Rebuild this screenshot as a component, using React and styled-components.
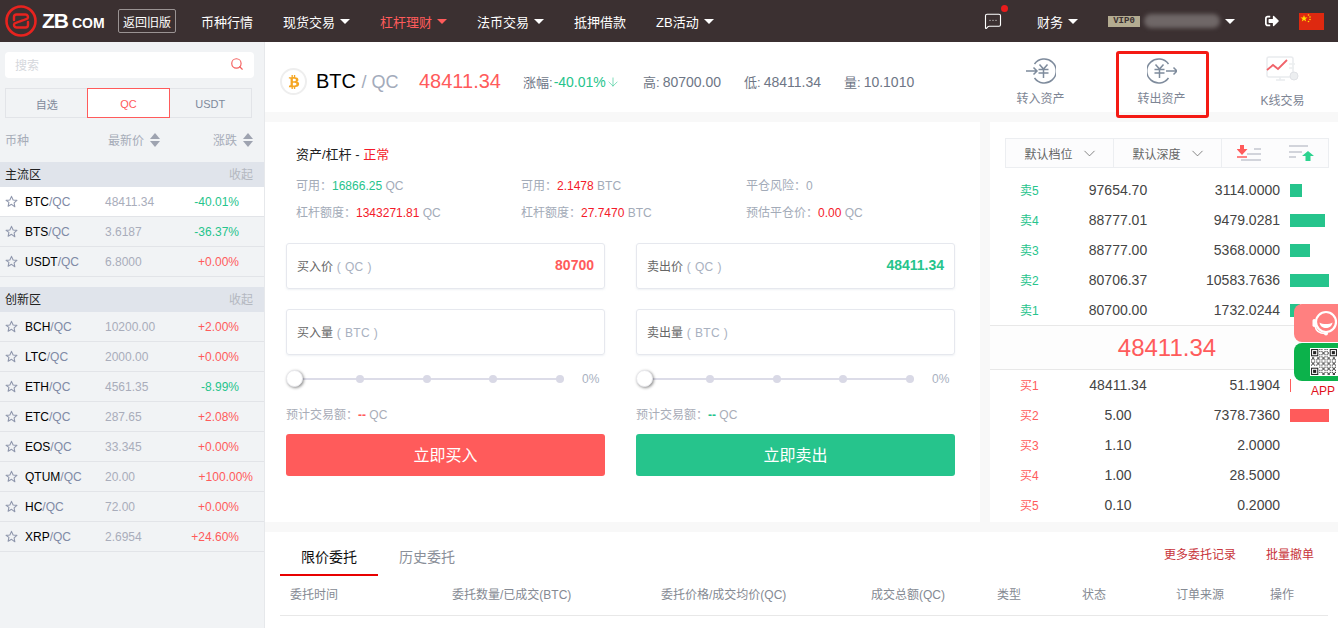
import React from 'react';
import styled, { createGlobalStyle } from 'styled-components';
import { Search, ChevronDown, MessageSquareMore, ArrowDown } from 'lucide-react';
import { FaBtc, FaSignOutAlt } from 'react-icons/fa';

const GREEN = '#26c48c';
const RED = '#ff5b5b';

const Global = createGlobalStyle`
  html, body { margin: 0; padding: 0; height: 628px; overflow: hidden; background: #f8f8f8; }
  body { font-family: "Liberation Sans", "Noto Sans CJK SC", sans-serif; font-size: 12px; color: #333; }
  * { box-sizing: border-box; }
`;

const Page = styled.div`
  position: relative;
  width: 1338px;
  height: 628px;
  overflow: hidden;
`;

/* ---------- top bar ---------- */
const Header = styled.header`
  height: 42px;
  background: #3b3031;
  display: flex;
  align-items: center;
  padding-left: 5px;
  color: #fff;
`;
const Logo = styled.div`
  display: flex;
  align-items: center;
  width: 113px;
`;
const LogoZb = styled.span`
  margin-left: 5px;
  font-size: 21px;
  font-weight: 700;
  letter-spacing: -1px;
  width: 30px;
`;
const LogoCom = styled.span`
  font-size: 14px;
  font-weight: 700;
  padding-top: 3px;
`;
const OldVersion = styled.a`
  border: 1px solid #9a9393;
  border-radius: 2px;
  height: 24px;
  width: 58px;
  font-size: 12px;
  display: flex;
  align-items: center;
  justify-content: center;
`;
const Nav = styled.nav`
  display: flex;
  align-items: center;
  gap: 30px;
  margin-left: 25px;
  flex: 1;
`;
const NavItem = styled.a`
  display: flex;
  align-items: center;
  font-size: 13px;
  margin-left: ${p => p.$ml || 0}px;
  color: ${p => (p.$active ? '#ff5b5b' : '#fff')};
`;
const Caret = styled.i`
  display: inline-block;
  margin-left: 5px;
  border-left: 5px solid transparent;
  border-right: 5px solid transparent;
  border-top: 5px solid currentColor;
`;
const HeaderRight = styled.div`
  display: flex;
  align-items: center;
  padding-right: 14px;
`;
const Msg = styled.div`
  position: relative;
  display: flex;
  width: 18px;
  margin-right: 35px;
`;
const MsgDot = styled.i`
  position: absolute;
  top: -7px;
  right: -6px;
  width: 7px;
  height: 7px;
  border-radius: 50%;
  background: #e91c1c;
`;
const VipBadge = styled.span`
  margin-left: 30px;
  width: 32px;
  height: 11px;
  background: #b4ac91;
  color: #3b3031;
  font-family: "Liberation Mono", monospace;
  font-size: 9px;
  font-weight: 700;
  line-height: 11px;
  text-align: center;
`;
const BlurName = styled.span`
  width: 76px;
  height: 14px;
  margin-left: 4px;
  border-radius: 7px;
  background: #6f6767;
  filter: blur(2px);
`;
const Flag = styled.svg`
  width: 25px;
  height: 17px;
  margin-left: 20px;
`;

/* ---------- layout ---------- */
const Body = styled.div`
  display: flex;
  height: 586px;
`;
const Side = styled.aside`
  width: 265px;
  flex: none;
  background: #f1f3f5;
  border-right: 1px solid #e6e8eb;
  padding-top: 10px;
`;
const Main = styled.main`
  flex: 1;
  display: flex;
  flex-direction: column;
  gap: 10px;
`;

/* ---------- sidebar ---------- */
const SearchBox = styled.div`
  margin: 0 10px 0 5px;
  height: 26px;
  background: #fff;
  border-radius: 4px;
  display: flex;
  align-items: center;
  justify-content: space-between;
  padding: 0 10px 2px;
  color: #d5d7dc;
`;
const Tabs = styled.div`
  display: flex;
  margin: 10px 0 0 5px;
  width: 247px;
  height: 30px;
  border: 1px solid #e2e4e8;
`;
const Tab = styled.div`
  flex: 1;
  display: flex;
  align-items: center;
  justify-content: center;
  padding-top: 1px;
  font-size: 11px;
  color: ${p => (p.$active ? '#ff5b5b' : '#7f8a9c')};
  ${p => p.$active && `background:#fff; outline:1px solid #ff5b5b;`}
`;
const ColHead = styled.div`
  height: 44px;
  display: flex;
  align-items: center;
  padding: 0 11px 1px 5px;
  color: #a6acb8;
  font-size: 12px;
`;
const HeadName = styled.span`
  width: 103px;
`;
const HeadPrice = styled.span`
  width: 77px;
  display: flex;
  align-items: center;
  gap: 6px;
`;
const HeadChange = styled.span`
  flex: 1;
  display: flex;
  align-items: center;
  justify-content: flex-end;
  gap: 6px;
`;
const SortWrap = styled.i`
  display: inline-flex;
  flex-direction: column;
  gap: 2px;
  &::before, &::after {
    content: '';
    border-left: 5px solid transparent;
    border-right: 5px solid transparent;
  }
  &::before { border-bottom: 6px solid #9ea3b0; }
  &::after { border-top: 6px solid #9ea3b0; }
`;
const GroupHead = styled.div`
  height: 25px;
  margin-top: ${p => p.$gap || 0}px;
  background: #e0e4eb;
  display: flex;
  align-items: center;
  justify-content: space-between;
  padding: 0 11px 2px 5px;
  color: #222;
  font-size: 12px;
`;
const Fold = styled.span`
  color: #b4b8c0;
`;
const CoinRow = styled.div`
  height: 30px;
  display: flex;
  align-items: center;
  padding-left: 5px;
  background: ${p => (p.$active ? '#fff' : 'transparent')};
  border-bottom: 1px solid #e2e4e8;
`;
const Pair = styled.span`
  flex: none;
  width: 80px;
  margin-left: 7px;
  color: #000;
  b { font-weight: 400; color: #7f8aa5; }
`;
const LastPrice = styled.span`
  flex: none;
  width: 75px;
  color: #a9adbb;
`;
const Change = styled.span`
  flex: none;
  width: ${p => (p.$wide ? 73 : 59)}px;
  text-align: right;
  white-space: nowrap;
  color: ${p => (p.$up ? RED : GREEN)};
`;

/* ---------- ticker ---------- */
const Ticker = styled.section`
  height: 70px;
  background: #fff;
  display: flex;
  align-items: center;
  padding: 9px 0 0 15px;
`;
const CoinIcon = styled.span`
  width: 27px;
  height: 27px;
  border-radius: 50%;
  border: 2px solid #eeeeee;
  color: #f5a623;
  display: flex;
  align-items: center;
  justify-content: center;
  font-size: 14px;
`;
const Symbol = styled.span`
  margin-left: 9px;
  font-size: 20px;
  color: #000;
  width: 103px;
  small { font-size: 18px; color: #a3abbb; }
`;
const TickerPrice = styled.span`
  font-size: 20px;
  color: ${RED};
  width: 104px;
`;
const Stat = styled.span`
  display: flex;
  align-items: center;
  gap: ${p => p.$gap || 3}px;
  font-size: 14px;
  color: #6e7686;
  width: ${p => p.$w}px;
  white-space: nowrap;
  em { font-style: normal; font-size: 13px; }
`;
const StatGreen = styled.span`
  display: flex;
  align-items: center;
  color: ${GREEN};
`;
const Actions = styled.div`
  display: flex;
  margin-left: auto;
  align-self: flex-start;
  height: 67px;
  padding-right: 8px;
`;
const ActionItem = styled.div`
  width: 93px;
  margin-left: ${p => p.$ml}px;
  display: flex;
  flex-direction: column;
  align-items: center;
  padding: ${p => p.$pt}px 2px 0 0;
  gap: 5px;
  color: #7d8594;
  border: 3px solid ${p => (p.$marked ? '#f41a14' : 'transparent')};
  border-radius: 3px;
  font-size: 12px;
`;

/* ---------- order form ---------- */
const Middle = styled.div`
  display: flex;
  gap: 10px;
  height: 400px;
`;
const FormPanel = styled.section`
  width: 715px;
  background: #fff;
  padding: 0 21px;
`;
const Title = styled.div`
  padding: 24px 0 0 10px;
  height: 49px;
  font-size: 13px;
  color: #222;
  line-height: 17px;
  span { color: #f41a2a; }
`;
const InfoGrid = styled.div`
  display: grid;
  grid-template-columns: repeat(3, 225px);
  grid-auto-rows: 27px;
  padding-left: 10px;
  color: #a3abb8;
  align-items: center;
`;
const Num = styled.span`
  color: ${p => p.$c};
`;
const Columns = styled.div`
  display: flex;
  gap: 31px;
  margin-top: 18px;
`;
const TradeCol = styled.div`
  width: 319px;
`;
const Field = styled.div`
  height: 46px;
  margin-bottom: 20px;
  border: 1px solid #e6e8ee;
  border-radius: 3px;
  display: flex;
  align-items: center;
  justify-content: space-between;
  padding: 0 10px 2px;
  box-shadow: 0 1px 2px rgba(210, 214, 224, 0.35);
  color: #666;
  small { font-size: 12px; color: #a9b1bf; letter-spacing: 0.4px; }
`;
const FieldValue = styled.b`
  font-size: 14px;
  color: ${p => p.$c};
`;
const SliderRow = styled.div`
  display: flex;
  align-items: center;
  height: 26px;
  margin-top: -9px;
  color: #a9b1bf;
`;
const Track = styled.div`
  position: relative;
  width: 274px;
  height: 2px;
  background: #dcdce8;
  margin: 0 18px 0 4px;
  display: flex;
  justify-content: space-between;
  align-items: center;
  padding-left: 66px;
`;
const Dot = styled.i`
  width: 8px;
  height: 8px;
  border-radius: 50%;
  background: #d9d9e6;
`;
const Handle = styled.i`
  position: absolute;
  left: -4px;
  top: -8px;
  width: 17px;
  height: 17px;
  border-radius: 50%;
  background: #fff;
  border: 1px solid #e8e8ec;
  box-shadow: 1px 1px 3px rgba(0, 0, 0, 0.45);
`;
const Estimate = styled.div`
  margin-top: 15px;
  height: 16px;
  line-height: 16px;
  color: #a9adb8;
  b { color: ${p => p.$c}; }
`;
const Submit = styled.button`
  display: block;
  width: 100%;
  height: 42px;
  margin-top: 11px;
  padding: 0 0 2px;
  border: 0;
  border-radius: 3px;
  color: #fff;
  font: inherit;
  font-size: 16px;
  background: ${p => p.$c};
`;

/* ---------- order book ---------- */
const BookPanel = styled.section`
  flex: 1;
  background: #fff;
  padding-top: 16px;
`;
const BookTools = styled.div`
  margin: 0 9px 0 15px;
  height: 30px;
  border: 1px solid #eceef1;
  background: #fcfcfd;
  display: flex;
  color: #666;
`;
const ToolCell = styled.div`
  width: 108px;
  border-right: 1px solid #eceef1;
  display: flex;
  align-items: center;
  justify-content: center;
  gap: 7px;
  padding-left: 4px;
  span { padding-top: 1px; }
`;
const ToolIcons = styled.div`
  flex: 1;
  display: flex;
  align-items: center;
  gap: 28px;
  padding-left: 15px;
`;
const BookList = styled.div`
  padding-top: ${p => p.$pt}px;
`;
const BookRow = styled.div`
  height: 30px;
  display: flex;
  align-items: center;
  padding-left: 30px;
`;
const OrderSide = styled.span`
  width: 68px;
  padding-bottom: 2px;
  font-size: 12px;
  color: ${p => p.$c};
`;
const BookPrice = styled.span`
  width: 60px;
  font-size: 14px;
  color: #444;
  text-align: center;
  white-space: nowrap;
`;
const BookAmount = styled.span`
  width: 132px;
  font-size: 14px;
  color: #444;
  text-align: right;
`;
const Bar = styled.i`
  margin-left: 10px;
  height: 13px;
  background: ${p => p.$c};
`;
const MidPrice = styled.div`
  height: 45px;
  border-top: 1px solid #e8e8e8;
  border-bottom: 1px solid #e8e8e8;
  background: #fdfdfd;
  display: flex;
  align-items: center;
  justify-content: center;
  font-size: 24px;
  color: ${RED};
  padding-left: 6px;
`;

/* ---------- orders ---------- */
const Orders = styled.section`
  flex: 1;
  background: #fff;
  padding: 0 10px 0 15px;
`;
const OrderTabs = styled.div`
  display: flex;
  align-items: flex-start;
  height: 44px;
`;
const OrderTab = styled.div`
  width: ${p => p.$w}px;
  height: 44px;
  line-height: 50px;
  font-size: 14px;
  text-align: center;
  color: ${p => (p.$active ? '#111' : '#8a8f99')};
  border-bottom: 2px solid ${p => (p.$active ? '#e80000' : 'transparent')};
`;
const OrderLinks = styled.div`
  margin-left: auto;
  padding: 13px 14px 0 0;
  display: flex;
  gap: 30px;
  color: #c8333a;
`;
const OrderHead = styled.div`
  display: grid;
  grid-template-columns: 162px 209px 210px 126px 85px 94px 94px 1fr;
  height: 40px;
  padding: 0 0 4px 10px;
  align-items: center;
  color: #858a93;
  border-bottom: 1px solid #e8e8e8;
`;

/* ---------- floating widgets ---------- */
const Float = styled.div`
  position: absolute;
  right: 0;
  top: 304px;
  width: 44px;
  display: flex;
  flex-direction: column;
  align-items: stretch;
  gap: 1px;
`;
const ServiceBtn = styled.div`
  height: 38px;
  background: #ff8080;
  border-radius: 8px 0 0 8px;
  display: flex;
  align-items: center;
  padding-left: 17px;
  overflow: hidden;
`;
const QrBtn = styled.div`
  height: 38px;
  background: #0cb24b;
  border-radius: 8px 0 0 8px;
  display: flex;
  align-items: center;
  justify-content: flex-end;
`;
const AppLabel = styled.div`
  color: #e0101a;
  font-size: 12px;
  padding: 2px 0 0 17px;
`;

/* ---------- drawings ---------- */
const LogoMark = () => (
  <svg width="32" height="32" viewBox="0 0 32 32" fill="none" stroke="#e8231f">
    <circle cx="16" cy="16" r="14.500" strokeWidth="2.600" />
    <path
      d="M9 15v-3a2.500 2.500 0 0 1 2.500-2.500H20.500a2.500 2.500 0 0 1 2 4L15 16.500M23 17v3a2.500 2.500 0 0 1-2.500 2.500H11.500a2.500 2.500 0 0 1-2-4L17 15.500"
      strokeWidth="2.400"
      strokeLinecap="round"
    />
  </svg>
);

const Star = () => (
  <svg width="13" height="13" viewBox="0 0 24 24" fill="none" stroke="#8f97ad" strokeWidth="2" strokeLinejoin="round">
    <path d="M12 2.500l3 6.600 7 .8-5.200 4.800 1.400 7L12 17.200 5.800 20.700l1.400-7L2 9.900l7-.8z" />
  </svg>
);

const TransferIn = () => (
  <svg width="30" height="26" viewBox="0 0 30 26" fill="none" stroke="#7e8b9c" strokeWidth="1.500">
    <path d="M8.500 6A12 12 0 1 1 8.500 20" />
    <path d="M0 13h11M7.500 9.500L11 13l-3.500 3.500" />
    <path d="M13.500 6.500L17.500 11l4-4.500M12.500 11.500h10M12.500 15h10M17.500 11v9" />
  </svg>
);

const TransferOut = () => (
  <svg width="30" height="26" viewBox="0 0 30 26" fill="none" stroke="#7e8b9c" strokeWidth="1.500">
    <path d="M21.500 6A12 12 0 1 0 21.500 20" />
    <path d="M19 13h11M26.500 9.500L30 13l-3.500 3.500" />
    <path d="M8.500 6.500L12.500 11l4-4.500M7.500 11.500h10M7.500 15h10M12.500 11v9" />
  </svg>
);

const KlineIcon = () => (
  <svg width="36" height="30" viewBox="0 0 36 30" fill="none">
    <rect x="2" y="1" width="26" height="20" rx="2" stroke="#e9ebee" strokeWidth="1.500" />
    <path d="M11 24h9M15 21v3" stroke="#e9ebee" strokeWidth="1.500" />
    <circle cx="29" cy="20" r="4" fill="#eceef0" stroke="#e0e2e6" />
    <path d="M24 8h6M24 12h5" stroke="#eceef0" strokeWidth="1.500" />
    <path d="M2 14l6-5 5 4 9-9" stroke="#f0636a" strokeWidth="1.800" />
  </svg>
);

const SellSort = () => (
  <svg width="24" height="16" viewBox="0 0 24 16" fill="none">
    <path d="M3 0h4v4h3.500L5 10 -.5 4H3z" fill={RED} />
    <path d="M0 12h10" stroke={RED} strokeWidth="1.500" />
    <path d="M17 4h7M10 9h14M4 15h20" stroke="#c3c6d0" strokeWidth="1.500" />
  </svg>
);

const BuySort = () => (
  <svg width="26" height="16" viewBox="0 0 26 16" fill="none">
    <path d="M0 1h19M0 7h13M0 12h7" stroke="#c3c6d0" strokeWidth="1.500" />
    <path d="M19 6l6 5h-3.500v5h-5v-5H13z" fill="#2cd38f" />
  </svg>
);

const ChinaFlag = () => (
  <Flag viewBox="0 0 25 17">
    <rect width="25" height="17" fill="#de2910" />
    <path d="M5 2l.9 2.500H8.500L6.400 6l.8 2.500L5 7 2.800 8.500 3.600 6 1.500 4.500h2.600z" fill="#ffde00" />
    <circle cx="9.500" cy="2" r=".8" fill="#ffde00" />
    <circle cx="11" cy="4" r=".8" fill="#ffde00" />
    <circle cx="11" cy="6.500" r=".8" fill="#ffde00" />
    <circle cx="9.500" cy="8.500" r=".8" fill="#ffde00" />
  </Flag>
);

const ServiceIcon = () => (
  <svg width="27" height="30" viewBox="0 0 27 30" fill="none" style={{ flex: 'none' }}>
    <circle cx="15" cy="14" r="10" stroke="#fff" strokeWidth="2.200" />
    <path d="M8.500 14.500c3 2 10 2 13 0-.5 4-3.500 5.500-6.500 5.500s-6-1.500-6.500-5.500z" fill="#fff" />
    <rect x="1.500" y="11" width="3.500" height="8" rx="1.700" fill="#fff" />
    <path d="M4 18c1 5 5 7.500 10 7.500" stroke="#fff" strokeWidth="1.500" />
    <circle cx="15" cy="25.500" r="2" fill="#fff" />
  </svg>
);

// not a real code, just the look of one
const QrCode = () => {
  const cells = [];
  for (let y = 0; y < 25; y++) {
    for (let x = 0; x < 25; x++) {
      const inFinder = (x < 8 && y < 8) || (x > 16 && y < 8) || (x < 8 && y > 16);
      if (!inFinder && (x * 7 + y * 13 + x * y * 3) % 5 < 2) {
        cells.push(<rect key={`${x}-${y}`} x={x} y={y} width="1" height="1" />);
      }
    }
  }
  const finder = (x, y) => (
    <g key={`${x}${y}`}>
      <rect x={x} y={y} width="7" height="7" />
      <rect x={x + 1} y={y + 1} width="5" height="5" fill="#fff" />
      <rect x={x + 2} y={y + 2} width="3" height="3" />
    </g>
  );
  return (
    <svg width="28" height="28" viewBox="-1 -1 27 27" fill="#222" style={{ background: '#fff' }}>
      {cells}
      {finder(0, 0)}
      {finder(18, 0)}
      {finder(0, 18)}
    </svg>
  );
};

/* ---------- data ---------- */
const mainCoins = [
  ['BTC', '48411.34', '-40.01%', false],
  ['BTS', '3.6187', '-36.37%', false],
  ['USDT', '6.8000', '+0.00%', true],
];
const newCoins = [
  ['BCH', '10200.00', '+2.00%', true],
  ['LTC', '2000.00', '+0.00%', true],
  ['ETH', '4561.35', '-8.99%', false],
  ['ETC', '287.65', '+2.08%', true],
  ['EOS', '33.345', '+0.00%', true],
  ['QTUM', '20.00', '+100.00%', true, true],
  ['HC', '72.00', '+0.00%', true],
  ['XRP', '2.6954', '+24.60%', true],
];
const asks = [
  ['卖5', '97654.70', '3114.0000', 12],
  ['卖4', '88777.01', '9479.0281', 35],
  ['卖3', '88777.00', '5368.0000', 20],
  ['卖2', '80706.37', '10583.7636', 39],
  ['卖1', '80700.00', '1732.0244', 10],
];
const bids = [
  ['买1', '48411.34', '51.1904', 1],
  ['买2', '5.00', '7378.7360', 39],
  ['买3', '1.10', '2.0000', 0],
  ['买4', '1.00', '28.5000', 0],
  ['买5', '0.10', '0.2000', 0],
];
const orderCols = ['委托时间', '委托数量/已成交(BTC)', '委托价格/成交均价(QC)', '成交总额(QC)', '类型', '状态', '订单来源', '操作'];

const Coin = ({ item, active }) => (
  <CoinRow $active={active}>
    <Star />
    <Pair>{item[0]}<b>/QC</b></Pair>
    <LastPrice>{item[1]}</LastPrice>
    <Change $up={item[3]} $wide={item[4]}>{item[2]}</Change>
  </CoinRow>
);

const Book = ({ rows, color, pt }) => (
  <BookList $pt={pt}>
    {rows.map(r => (
      <BookRow key={r[0]}>
        <OrderSide $c={color}>{r[0]}</OrderSide>
        <BookPrice>{r[1]}</BookPrice>
        <BookAmount>{r[2]}</BookAmount>
        <Bar $c={color} style={{ width: r[3] }} />
      </BookRow>
    ))}
  </BookList>
);

const Trade = ({ priceLabel, amountLabel, value, color, action }) => (
  <TradeCol>
    <Field>
      <span>{priceLabel}<small> ( QC )</small></span>
      <FieldValue $c={color}>{value}</FieldValue>
    </Field>
    <Field>
      <span>{amountLabel}<small> ( BTC )</small></span>
    </Field>
    <SliderRow>
      <Track>
        <Handle />
        <Dot /><Dot /><Dot /><Dot />
      </Track>
      0%
    </SliderRow>
    <Estimate $c={color}>预计交易额：<b>--</b> QC</Estimate>
    <Submit $c={color}>{action}</Submit>
  </TradeCol>
);

export default function App() {
  return (
    <Page>
      <Global />
      <Header>
        <Logo>
          <LogoMark />
          <LogoZb>ZB</LogoZb>
          <LogoCom>COM</LogoCom>
        </Logo>
        <OldVersion>返回旧版</OldVersion>
        <Nav>
          <NavItem>币种行情</NavItem>
          <NavItem>现货交易<Caret /></NavItem>
          <NavItem $active>杠杆理财<Caret /></NavItem>
          <NavItem>法币交易<Caret /></NavItem>
          <NavItem>抵押借款</NavItem>
          <NavItem>ZB活动<Caret /></NavItem>
        </Nav>
        <HeaderRight>
          <Msg>
            <MessageSquareMore size={18} strokeWidth={1.5} />
            <MsgDot />
          </Msg>
          <NavItem>财务<Caret /></NavItem>
          <VipBadge>VIP0</VipBadge>
          <BlurName />
          <NavItem><Caret /></NavItem>
          <NavItem $ml={30}><FaSignOutAlt size={14} /></NavItem>
          <ChinaFlag />
        </HeaderRight>
      </Header>
      <Body>
        <Side>
          <SearchBox>
            搜索
            <Search size={14} color="#f4605f" strokeWidth={2} />
          </SearchBox>
          <Tabs>
            <Tab>自选</Tab>
            <Tab $active>QC</Tab>
            <Tab>USDT</Tab>
          </Tabs>
          <ColHead>
            <HeadName>币种</HeadName>
            <HeadPrice>最新价<SortWrap /></HeadPrice>
            <HeadChange>涨跌<SortWrap /></HeadChange>
          </ColHead>
          <GroupHead>主流区<Fold>收起</Fold></GroupHead>
          {mainCoins.map((c, i) => <Coin key={c[0]} item={c} active={i === 0} />)}
          <GroupHead $gap={10}>创新区<Fold>收起</Fold></GroupHead>
          {newCoins.map(c => <Coin key={c[0]} item={c} />)}
        </Side>
        <Main>
          <Ticker>
            <CoinIcon><FaBtc /></CoinIcon>
            <Symbol>BTC <small>/ QC</small></Symbol>
            <TickerPrice>48411.34</TickerPrice>
            <Stat $w={120} $gap={1}><em>涨幅:</em><StatGreen>-40.01%<ArrowDown size={14} strokeWidth={1} /></StatGreen></Stat>
            <Stat $w={101}><em>高:</em>80700.00</Stat>
            <Stat $w={100}><em>低:</em>48411.34</Stat>
            <Stat $w={90}><em>量:</em>10.1010</Stat>
            <Actions>
              <ActionItem $ml={0} $pt={4}><TransferIn />转入资产</ActionItem>
              <ActionItem $ml={28} $marked $pt={4}><TransferOut />转出资产</ActionItem>
              <ActionItem $ml={28} $pt={2}><KlineIcon />K线交易</ActionItem>
            </Actions>
          </Ticker>
          <Middle>
            <FormPanel>
              <Title>资产/杠杆 - <span>正常</span></Title>
              <InfoGrid>
                <div>可用：<Num $c={GREEN}>16866.25</Num> QC</div>
                <div>可用：<Num $c="#f41a2a">2.1478</Num> BTC</div>
                <div>平仓风险：0</div>
                <div>杠杆额度：<Num $c="#f41a2a">1343271.81</Num> QC</div>
                <div>杠杆额度：<Num $c="#f41a2a">27.7470</Num> BTC</div>
                <div>预估平仓价：<Num $c="#f41a2a">0.00</Num> QC</div>
              </InfoGrid>
              <Columns>
                <Trade priceLabel="买入价" amountLabel="买入量" value="80700" color={RED} action="立即买入" />
                <Trade priceLabel="卖出价" amountLabel="卖出量" value="48411.34" color={GREEN} action="立即卖出" />
              </Columns>
            </FormPanel>
            <BookPanel>
              <BookTools>
                <ToolCell><span>默认档位</span><ChevronDown size={19} strokeWidth={1} /></ToolCell>
                <ToolCell><span>默认深度</span><ChevronDown size={19} strokeWidth={1} /></ToolCell>
                <ToolIcons><SellSort /><BuySort /></ToolIcons>
              </BookTools>
              <Book rows={asks} color={GREEN} pt={7} />
              <MidPrice>48411.34</MidPrice>
              <Book rows={bids} color={RED} pt={0} />
            </BookPanel>
          </Middle>
          <Orders>
            <OrderTabs>
              <OrderTab $active $w={98}>限价委托</OrderTab>
              <OrderTab $w={98}>历史委托</OrderTab>
              <OrderLinks><span>更多委托记录</span><span>批量撤单</span></OrderLinks>
            </OrderTabs>
            <OrderHead>
              {orderCols.map(c => <span key={c}>{c}</span>)}
            </OrderHead>
          </Orders>
        </Main>
      </Body>
      <Float>
        <ServiceBtn><ServiceIcon /></ServiceBtn>
        <QrBtn><QrCode /></QrBtn>
        <AppLabel>APP</AppLabel>
      </Float>
    </Page>
  );
}
